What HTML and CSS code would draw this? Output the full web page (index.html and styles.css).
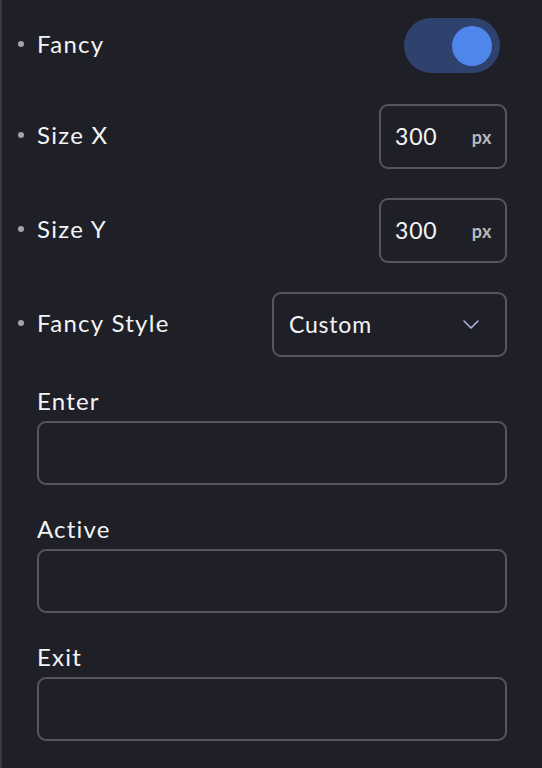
FILE: index.html
```html
<!DOCTYPE html>
<html lang="en">
<head>
<meta charset="utf-8">
<title>Fancy settings</title>
<link rel="stylesheet" href="styles.css">
</head>
<body>
<div class="panel">
  <div class="rows">
    <div class="row row-toggle">
      <div class="label"><span class="bullet"></span>Fancy</div>
      <div class="toggle"><span class="knob"></span></div>
    </div>
    <div class="row">
      <div class="label"><span class="bullet"></span>Size X</div>
      <div class="num"><span class="val">300</span><span class="unit">px</span></div>
    </div>
    <div class="row">
      <div class="label"><span class="bullet"></span>Size Y</div>
      <div class="num"><span class="val">300</span><span class="unit">px</span></div>
    </div>
    <div class="row">
      <div class="label"><span class="bullet"></span>Fancy Style</div>
      <div class="select"><span class="val">Custom</span>
        <svg class="chev" width="16" height="9" viewBox="0 0 16 9"><polyline points="1,1 8,8 15,1" fill="none" stroke="#a9b4dc" stroke-width="1.6" stroke-linecap="round" stroke-linejoin="round"/></svg>
      </div>
    </div>
  </div>
  <div class="fields">
    <div class="field">
      <div class="flabel">Enter</div>
      <div class="box"></div>
    </div>
    <div class="field">
      <div class="flabel">Active</div>
      <div class="box"></div>
    </div>
    <div class="field">
      <div class="flabel">Exit</div>
      <div class="box"></div>
    </div>
  </div>
</div>
</body>
</html>
```
FILE: styles.css
```css
html, body {
  margin: 0;
  padding: 0;
  background: #1f2027;
}
body {
  width: 542px;
  height: 768px;
  overflow: hidden;
  font-family: Lato, "Noto Sans", sans-serif;
  color: #f4f4f5;
}
.panel {
  box-sizing: border-box;
  height: 768px;
  border-left: 2px solid #3a3b41;
  padding: 18px 35px 0 16px;
}
.rows {
  display: flex;
  flex-direction: column;
  gap: 29px;
}
.row {
  display: flex;
  align-items: center;
  justify-content: space-between;
  height: 65px;
}
.row-toggle {
  height: 55px;
  margin-bottom: 2px;
}
.label {
  display: flex;
  align-items: center;
  font-size: 24px;
  line-height: 28px;
  letter-spacing: 1.3px;
  padding-bottom: 3px;
}
.row-toggle .label {
  padding-bottom: 4px;
}
.bullet {
  width: 6px;
  height: 6px;
  border-radius: 50%;
  background: #a3a4a9;
  margin-right: 13px;
}
.toggle {
  box-sizing: border-box;
  width: 96px;
  height: 55px;
  margin-right: 7px;
  border-radius: 28px;
  background: #2e426d;
  display: flex;
  align-items: center;
  justify-content: flex-end;
  padding-right: 8px;
}
.knob {
  width: 40px;
  height: 40px;
  border-radius: 50%;
  background: #4f86ec;
}
.num, .select, .box {
  box-sizing: border-box;
  height: 65px;
  border: 2px solid #55565c;
  border-radius: 9px;
}
.num {
  width: 128px;
  display: flex;
  align-items: center;
  justify-content: space-between;
  padding: 0 13px 0 14px;
}
.val {
  font-size: 23px;
  letter-spacing: 0.8px;
  padding-bottom: 2px;
}
.unit {
  font-size: 18px;
  font-weight: 700;
  color: #b7b8bd;
  letter-spacing: 0.5px;
}
.select {
  width: 235px;
  display: flex;
  align-items: center;
  justify-content: space-between;
  padding: 0 26px 0 15px;
}
.chev {
  display: block;
}
.fields {
  display: flex;
  flex-direction: column;
  gap: 30px;
  margin-top: 30px;
  padding-left: 19px;
}
.field {
  display: flex;
  flex-direction: column;
  gap: 6px;
}
.flabel {
  font-size: 24px;
  line-height: 28px;
  letter-spacing: 1.2px;
}
.box {
  height: 64px;
  width: 100%;
}
```
